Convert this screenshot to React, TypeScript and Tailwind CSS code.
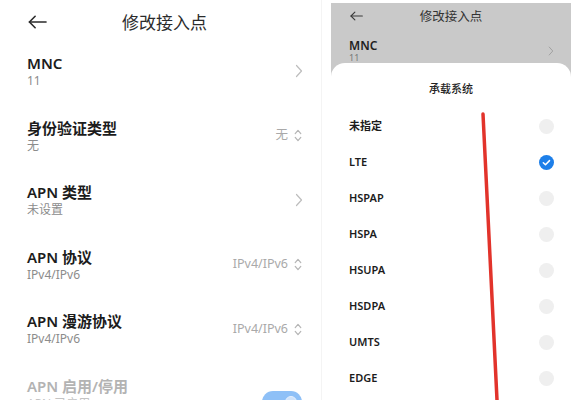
const font = { fontFamily: '"Noto Sans", "Noto Sans CJK SC", sans-serif' };

const rows = [
  { label: "MNC", sub: "11", kind: "chevron" },
  { label: "身份验证类型", sub: "无", kind: "select", value: "无" },
  { label: "APN 类型", sub: "未设置", kind: "chevron" },
  { label: "APN 协议", sub: "IPv4/IPv6", kind: "select", value: "IPv4/IPv6" },
  { label: "APN 漫游协议", sub: "IPv4/IPv6", kind: "select", value: "IPv4/IPv6" },
  { label: "APN 启用/停用", sub: "APN 已启用", kind: "toggle", disabled: true },
];

const systems = ["未指定", "LTE", "HSPAP", "HSPA", "HSUPA", "HSDPA", "UMTS", "EDGE", "GPRS"];

function BackArrow({ className }: { className?: string }) {
  return (
    <svg viewBox="0 0 20 14" className={className} fill="none" stroke="currentColor" strokeWidth="1.7" strokeLinecap="round" strokeLinejoin="round">
      <path d="M19 7H1.5" />
      <path d="M7.5 1L1.5 7l6 6" />
    </svg>
  );
}

function Chevron({ className }: { className?: string }) {
  return (
    <svg viewBox="0 0 8 14" className={className} fill="none" stroke="currentColor" strokeWidth="1.2" strokeLinecap="round" strokeLinejoin="round">
      <path d="M1.5 1.5L6.5 7l-5 5.5" />
    </svg>
  );
}

function UpDown() {
  return (
    <svg viewBox="0 0 8 14" className="w-[8px] h-[13px]" fill="none" stroke="#b5b5b5" strokeWidth="1.3" strokeLinecap="round" strokeLinejoin="round">
      <path d="M1 5l3-3.5L7 5" />
      <path d="M1 9l3 3.5L7 9" />
    </svg>
  );
}

function Radio({ checked }: { checked?: boolean }) {
  if (checked) {
    return (
      <svg viewBox="0 0 16 16" className="w-[15px] h-[15px]">
        <circle cx="8" cy="8" r="8" fill="#1d7fe9" />
        <path d="M4.6 8.2l2.3 2.2 4.3-4.4" fill="none" stroke="white" strokeWidth="1.6" strokeLinecap="round" strokeLinejoin="round" />
      </svg>
    );
  }
  return <div className="w-[15px] h-[15px] rounded-full bg-[#efefef]" />;
}

export default function App() {
  return (
    <div className="relative w-[576px] h-[400px] overflow-hidden bg-white flex" style={font}>
      {/* ===== LEFT ===== */}
      <div className="w-[322px] shrink-0 border-r border-[#f4f4f4]">
        <div className="relative h-[44px] pt-[2px] flex items-center justify-center">
          <BackArrow className="absolute left-[28px] top-[15px] w-[19px] h-[14px] text-[#2b2b2b]" />
          <span className="ml-[8px] text-[17px] leading-[24px] text-[#2b2b2b]">修改接入点</span>
        </div>
        {rows.map((r) => (
          <div key={r.label} className="h-[64.5px] pt-[9px] pl-[27px] pr-[19px] flex items-start justify-between">
            <div className="flex flex-col">
              <span className={`text-[15px] leading-[20px] font-semibold ${r.disabled ? "text-[#b3b3b3]" : "text-[#1c1c1c]"}`}>
                {r.label}
              </span>
              <span className={`text-[12px] leading-[16px] ${r.disabled ? "text-[#c4c4c4]" : "text-[#8c8c8c]"}`}>{r.sub}</span>
            </div>
            <div className="h-[36px] flex items-center gap-[6px]">
              {r.kind === "chevron" && <Chevron className="w-[8px] h-[14px] mr-[-1px] text-[#bdbdbd]" />}
              {r.kind === "select" && (
                <>
                  <span className="text-[12.5px] text-[#a9a9a9]">{r.value}</span>
                  <UpDown />
                </>
              )}
              {r.kind === "toggle" && (
                <div className="mt-[16px] w-[40px] h-[22px] rounded-full bg-[#8ec0f7] flex items-center justify-end pr-[5px]">
                  <div className="w-[12px] h-[12px] rounded-full bg-[#cfe3fb] border border-[#e6f0fd]" />
                </div>
              )}
            </div>
          </div>
        ))}
      </div>

      {/* ===== RIGHT ===== */}
      <div className="ml-[9px] mt-[3px] w-[240px] h-[397px] shrink-0 bg-[#c9c9c9] flex flex-col overflow-hidden">
        <div className="relative h-[27px] shrink-0 flex items-center justify-center">
          <BackArrow className="absolute left-[19px] top-[8px] w-[13px] h-[10px] text-[#3a3a3a]" />
          <span className="text-[12.5px] leading-[18px] text-[#333]">修改接入点</span>
        </div>
        <div className="h-[33px] shrink-0 pl-[18px] pr-[17px] pt-[9px] flex items-start justify-between">
          <div className="flex flex-col">
            <span className="text-[12px] leading-[14px] font-semibold text-[#1f1f1f]">MNC</span>
            <span className="text-[9px] leading-[10px] text-[#777]">11</span>
          </div>
          <Chevron className="mt-[7px] w-[6px] h-[10px] text-[#9a9a9a]" />
        </div>
        <div className="shrink-0 bg-white rounded-t-[14px] pt-[18px]">
          <div className="h-[16px] text-center text-[11px] leading-[16px] font-medium text-[#222]">承载系统</div>
          <div className="mt-[11px]">
            {systems.map((s) => (
              <div key={s} className="h-[36px] pl-[18px] pr-[17px] flex items-center justify-between">
                <span className="text-[11px] font-semibold text-[#1c1c1c]">{s}</span>
                <Radio checked={s === "LTE"} />
              </div>
            ))}
          </div>
        </div>
      </div>

      {/* red annotation stroke */}
      <svg className="absolute inset-0 pointer-events-none" width="576" height="400">
        <line x1="483" y1="114" x2="497.5" y2="410" stroke="#e2332b" strokeWidth="3.5" strokeLinecap="round" />
      </svg>
    </div>
  );
}
